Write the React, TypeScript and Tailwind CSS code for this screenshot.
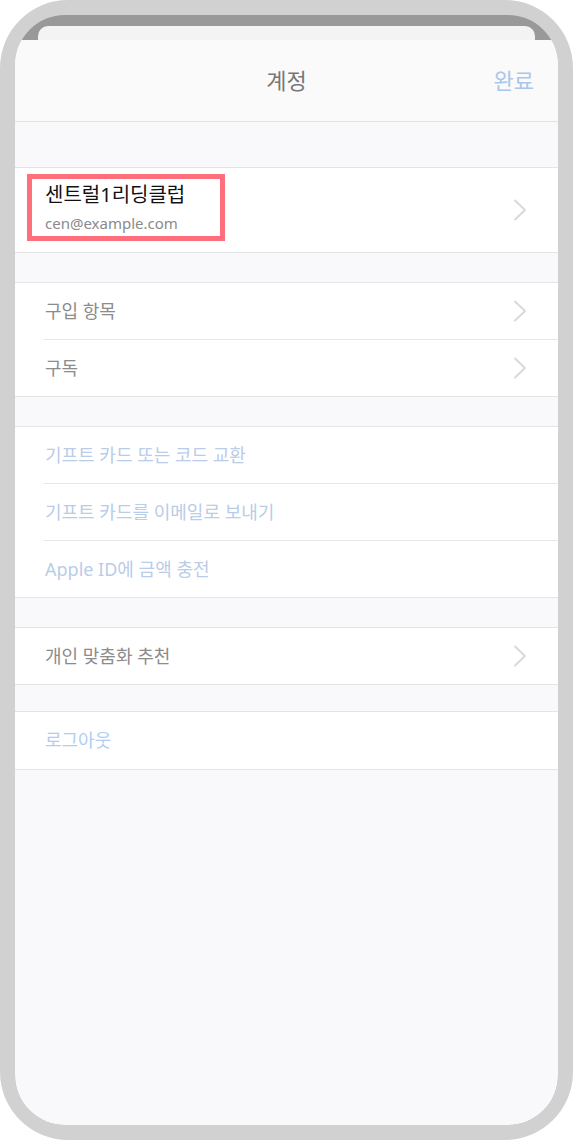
const font = { fontFamily: '"Noto Sans", "Noto Sans CJK KR", sans-serif' }

function Chevron() {
  return (
    <svg width="14" height="22" viewBox="0 0 14 22" fill="none" className="shrink-0">
      <path d="M2 1.5 L12 11 L2 20.5" stroke="#d9d9d9" strokeWidth="2" strokeLinecap="round" strokeLinejoin="round" />
    </svg>
  )
}

function Row({ label, color, chevron = false, last = false, h = 'h-[56px]' }: { label: string; color: string; chevron?: boolean; last?: boolean; h?: string }) {
  return (
    <div className="pl-[29px] bg-white">
      <div className={`flex items-center pr-[31px] ${last ? h : 'h-[57px] border-b border-[#e6e6e6]'}`}>
        <span className={`flex-1 pl-px text-[18px] ${color}`}>{label}</span>
        {chevron && <Chevron />}
      </div>
    </div>
  )
}

function Group({ children }: { children: React.ReactNode }) {
  return <div className="border-y border-[#e4e4e4] bg-white">{children}</div>
}

export default function App() {
  return (
    <div className="w-[573px] h-[1140px] bg-white" style={font}>
      <div className="h-full rounded-[68px] bg-[#d1d1d1] p-[15px]">
        <div className="h-full rounded-[50px] overflow-hidden bg-[#999999] flex flex-col">
          <div className="h-[25px] pt-[11px] px-[23px] shrink-0">
            <div className="h-full rounded-t-[10px] bg-[#f3f3f3]" />
          </div>

          <div className="flex-1 bg-[#f9f9fb] flex flex-col">
            <div className="h-[82px] shrink-0 bg-[#fafafa] border-b border-[#e2e2e2] flex items-center relative">
              <span className="flex-1 text-center text-[22px] text-[#777777]">계정</span>
              <span className="absolute right-[24px] text-[22px] text-[#abc6ec]">완료</span>
            </div>

            <div className="h-[45px]" />
            <Group>
              <div className="h-[84px] flex items-center pl-[12px] pr-[31px]">
                <div className="flex-1 pb-[6px]">
                  <div className="w-[198px] h-[67px] flex flex-col border-[5px] border-[#ff6f7b] pl-[13px] pt-[2px]">
                    <span className="text-[20px] leading-[28px] text-[#111111]">센트럴1리딩클럽</span>
                    <span className="mt-[3px] text-[15px] leading-[22px] text-[#8a8a8a]">cen@example.com</span>
                  </div>
                </div>
                <Chevron />
              </div>
            </Group>

            <div className="h-[29px]" />
            <Group>
              <Row label="구입 항목" color="text-[#8c8c8c]" chevron />
              <Row label="구독" color="text-[#8c8c8c]" chevron last />
            </Group>

            <div className="h-[29px]" />
            <Group>
              <Row label="기프트 카드 또는 코드 교환" color="text-[#b9cce8]" />
              <Row label="기프트 카드를 이메일로 보내기" color="text-[#b9cce8]" />
              <Row label="Apple ID에 금액 충전" color="text-[#b9cce8]" last />
            </Group>

            <div className="h-[29px]" />
            <Group>
              <Row label="개인 맞춤화 추천" color="text-[#8c8c8c]" chevron last />
            </Group>

            <div className="h-[26px]" />
            <Group>
              <Row label="로그아웃" color="text-[#b2cdf3]" last h="h-[57px]" />
            </Group>
          </div>
        </div>
      </div>
    </div>
  )
}
